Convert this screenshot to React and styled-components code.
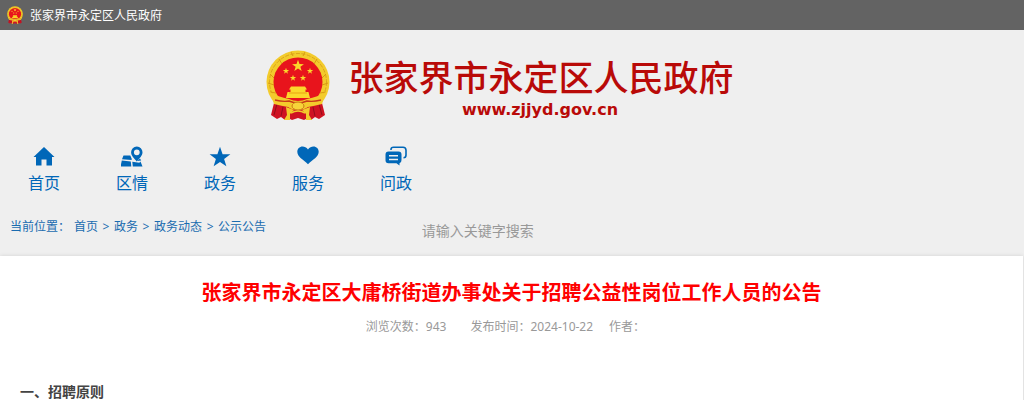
import React, { useState } from 'react';
import styled, { createGlobalStyle } from 'styled-components';

const GlobalStyle = createGlobalStyle`
    *{
        box-sizing: border-box;
    }

    body{
        margin: 0;
        background: #efefef;
        color: #444;
        font-family: "Noto Sans", "Noto Sans CJK SC", sans-serif;
        font-size: 12px;
        overflow-x: hidden;
    }
`;

const TopBar = styled.div`
    display: flex;
    align-items: center;
    gap: 7px;
    height: 30px;
    padding: 0 7px;
    background: #636363;
    color: #fff;
    line-height: 30px;

    span{
        padding-top: 2px;
    }
`;

const LogoBlock = styled.header`
    display: flex;
    justify-content: center;
    gap: 18px;
    padding: 20px 24px 0 0;
    color: #b90a08;

    .logoText{
        display: flex;
        flex-direction: column;
        align-items: center;
    }

    .logoName{
        margin: 0;
        padding-top: 4px;
        font-size: 35px;
        font-weight: 500;
        line-height: 48px;
    }

    .logoUrl{
        margin: 0;
        padding-right: 2px;
        font-family: "DejaVu Sans", sans-serif;
        font-size: 16px;
        font-weight: 700;
        line-height: 16px;
    }
`;

const NavBlock = styled.nav`
    display: flex;
    padding-top: 24px;
`;

const NavItem = styled.a`
    display: flex;
    flex-direction: column;
    align-items: center;
    gap: 4px;
    width: 88px;
    color: #0067b8;
    font-size: 16px;
    line-height: 24px;
    text-decoration: none;
`;

const ToolRow = styled.div`
    display: grid;
    grid-template-columns: 41% 1fr;
    align-items: start;
    padding-top: 20px;
`;

const Crumbs = styled.div`
    display: flex;
    gap: 4px;
    padding: 2px 0 0 10px;
    color: #1a6cb0;
    line-height: 20px;

    a{
        color: inherit;
        text-decoration: none;
    }

    .arrow{
        width: 8px;
        text-align: center;
    }
`;

const SearchInput = styled.input`
    width: 200px;
    height: 30px;
    margin-bottom: 11px;
    padding: 0 2px;
    border: 0;
    outline: 0;
    background: transparent;
    color: #444;
    font-family: inherit;
    font-size: 14px;

    &::placeholder{
        color: #999;
        opacity: 1;
    }
`;

const ArticleBlock = styled.main`
    margin-right: 1px;
    padding: 20px 20px 0;
    background: #fff;
    box-shadow: 0 0 4px rgba(0, 0, 0, 0.12);
`;

const ArticleTitle = styled.h1`
    margin: 0;
    color: #f00;
    font-size: 20px;
    font-weight: 700;
    line-height: 34px;
    text-align: center;
`;

const MetaBlock = styled.div`
    display: flex;
    justify-content: center;
    padding: 7px 12px 0 0;
    color: #999;
    line-height: 20px;

    .views{
        margin-right: 24px;
    }

    .date{
        margin-right: 16px;
    }
`;

const SectionTitle = styled.h2`
    margin: 0;
    padding-top: 43px;
    font-size: 14px;
    font-weight: 700;
    line-height: 24px;
`;

const STAR = 'M0-10 2.4-3.1 9.6-3 3.8 1.3 5.9 8.2 0 4.1-5.9 8.2-3.8 1.3-9.6-3-2.4-3.1Z';

const Emblem = ({ width, height }) => (
    <svg width={width} height={height} viewBox="0 0 64 71" preserveAspectRatio="none" aria-hidden="true">
        {/* 麦穗 */}
        <circle cx="32" cy="32" r="31.500" fill="#f3cb2c" />
        <circle cx="32" cy="32" r="28.500" fill="none" stroke="#dba51c" strokeWidth="1" strokeDasharray="4 1.500" />
        <path d="M4 24l4 4M2 33l6 2M4 42l6 1M60 24l-4 4M62 33l-6 2M60 42l-6 1M13 9l3 5M51 9l-3 5M25 2l2 4M39 2l-2 4" stroke="#d99a12" />
        <circle cx="32" cy="32" r="24.500" fill="#e8141c" />
        {/* 五星 */}
        <g fill="#fbd82b">
            <path transform="translate(32 16) scale(.62)" d={STAR} />
            <path transform="translate(20 21) scale(.33)" d={STAR} />
            <path transform="translate(44 21) scale(.33)" d={STAR} />
            <path transform="translate(27 28) scale(.33)" d={STAR} />
            <path transform="translate(37 28) scale(.33)" d={STAR} />
            {/* 天安门 */}
            <path d="M25 36.500h14l2 3h-1.500v2.500h3l1.500 6H20l1.500-6h3v-2.500H23z" />
        </g>
        <path d="M23 43h18" stroke="#e9a315" />
        {/* 红绸 */}
        <path d="M9 49l14 6v11l-4 4-4-3-4 2-6-4zM55 49l-14 6v11l4 4 4-3 4 2 6-4z" fill="#cf1222" />
        <path d="M11 54l-3 11M17 57l-2 9M53 54l3 11M47 57l2 9" stroke="#920f1b" />
        <path d="M22 56h20v12l-4 2-6-2-6 2-4-2z" fill="#cf1222" />
        <path d="M4 42q8 5 19 7 4 2 9 2t9-2q11-2 19-7l-4 12q-8 2-14 3-4 3-10 3t-10-3q-6-1-14-3z" fill="#f3cb2c" />
        <path d="M9 50q8 2 14 1 9 4 18 0 6 1 14-1" fill="none" stroke="#c93a18" strokeWidth="1.400" />
        <ellipse cx="32" cy="56" rx="6" ry="4" fill="#f7d43a" stroke="#c97814" />
        <path d="M20 57l8 3-4 4v6h-6l3-5zM44 57l-8 3 4 4v6h6l-3-5z" fill="#f3cb2c" />
        <path d="M25 63q7-4 14 0" fill="none" stroke="#f3cb2c" strokeWidth="1.500" />
    </svg>
);

const HomeIcon = () => <path d="M11 2 .5 12H3v8.500h5.500v-6h5v6H19V12h2.500Z" />;

const MapIcon = () => (
    <>
        <path d="M2.500 10.500h6.800l1.500 3.500-.3 1-9.500-.7zM.8 15.600l9 .9.500 5H-.5zM11.300 16.800l7 .9 1.200-1.200 2 5h-9.700zM16 16l3-2.500 1.200 2z" />
        <path
            fillRule="evenodd"
            d="M15.800 1.500a5.700 5.700 0 0 0-5.700 5.800c0 3.500 3 6 5.700 9.200 2.700-3.200 5.700-5.700 5.700-9.200a5.700 5.700 0 0 0-5.700-5.800zm0 2.900a2.900 2.900 0 1 1 0 5.800 2.900 2.900 0 0 1 0-5.800z"
        />
    </>
);

const StarIcon = () => <path transform="translate(11 12.500) scale(1.080)" d={STAR} />;

const HeartIcon = () => (
    <path d="M11 4.500C9.500 2.200 7.500 1.500 5.600 1.500 2.500 1.500.3 3.800.3 6.800c0 5 6 8 10.700 12.400 4.700-4.400 10.700-7.400 10.700-12.400 0-3-2.200-5.300-5.300-5.300-1.900 0-3.900.7-5.400 3z" />
);

const ChatIcon = () => (
    <>
        <path d="M6 5V4.500Q6 2.300 8.500 2.300H18q3 0 3 3V10q0 2.700-2.500 2.700" fill="none" stroke="currentColor" strokeWidth="1.600" />
        <path
            fillRule="evenodd"
            d="M3.500 6.500h10q3 0 3 3v5.500q0 3-2 3.300v2.200L11.500 18.300h-8q-3 0-3-3V9.500q0-3 3-3zM4 10v1.500h9V10zm0 3.700v1.500h9v-1.500z"
        />
    </>
);

const navList = [
    { name: '首页', Icon: HomeIcon },
    { name: '区情', Icon: MapIcon },
    { name: '政务', Icon: StarIcon },
    { name: '服务', Icon: HeartIcon },
    { name: '问政', Icon: ChatIcon },
];

const crumbList = ['首页', '政务', '政务动态', '公示公告'];

const App = () => {
    const [keyword, setKeyword] = useState('');

    return (
        <>
            <GlobalStyle />
            <TopBar>
                <Emblem width={16} height={18} />
                <span>张家界市永定区人民政府</span>
            </TopBar>
            <LogoBlock>
                <Emblem width={64} height={71} />
                <div className="logoText">
                    <p className="logoName">张家界市永定区人民政府</p>
                    <p className="logoUrl">www.zjjyd.gov.cn</p>
                </div>
            </LogoBlock>
            <NavBlock>
                {navList.map(({ name, Icon }) => (
                    <NavItem href="#" key={name}>
                        <svg width="22" height="22" viewBox="0 0 22 22" fill="currentColor" aria-hidden="true">
                            <Icon />
                        </svg>
                        {name}
                    </NavItem>
                ))}
            </NavBlock>
            <ToolRow>
                <Crumbs>
                    <span>当前位置：</span>
                    {crumbList.map((name, i) => (
                        <React.Fragment key={name}>
                            {i > 0 && <span className="arrow">&gt;</span>}
                            <a href="#">{name}</a>
                        </React.Fragment>
                    ))}
                </Crumbs>
                <SearchInput
                    type="text"
                    aria-label="请输入关键字搜索"
                    placeholder="请输入关键字搜索"
                    value={keyword}
                    onChange={(e) => setKeyword(e.target.value)}
                />
            </ToolRow>
            <ArticleBlock>
                <ArticleTitle>张家界市永定区大庸桥街道办事处关于招聘公益性岗位工作人员的公告</ArticleTitle>
                <MetaBlock>
                    <span className="views">浏览次数：943</span>
                    <span className="date">发布时间：2024-10-22</span>
                    <span>作者：</span>
                </MetaBlock>
                <SectionTitle>一、招聘原则</SectionTitle>
            </ArticleBlock>
        </>
    );
};

export default App;
